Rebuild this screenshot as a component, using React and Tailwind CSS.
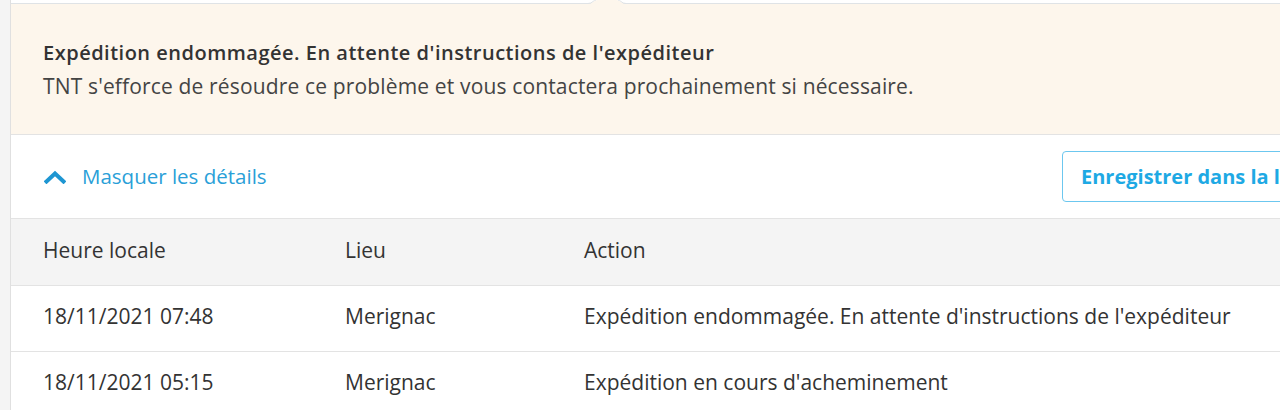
const rows = [
  { time: "18/11/2021 07:48", place: "Merignac", action: "Expédition endommagée. En attente d'instructions de l'expéditeur" },
  { time: "18/11/2021 05:15", place: "Merignac", action: "Expédition en cours d'acheminement" },
];

export default function App() {
  return (
    <div
      className="w-[1280px] h-[410px] overflow-hidden flex bg-[#f4f4f4] text-[#333]"
      style={{ fontFamily: "'Open Sans', sans-serif" }}
    >
      <div className="w-[10px] shrink-0" />
      <div className="w-[1340px] shrink-0 bg-white border-l border-[#e0e0e0] flex flex-col">
        {/* top strip with pointer */}
        <div className="relative h-[4px] shrink-0 border-b border-[#dfe3e6] bg-white">
          <svg className="absolute left-[574px] top-0" width="44" height="5" viewBox="0 0 44 5">
            <path d="M0 4 L3 4 Q6 4 8 2 Q10 0 13 0 L31 0 Q34 0 36 2 Q38 4 41 4 L44 4 L44 5 L0 5 Z" fill="#fdf6ec" />
            <path d="M0 3.5 L3 3.5 Q6 3.5 8 1.5 Q9.5 0 11 0" stroke="#dfe3e6" fill="none" />
            <path d="M33 0 Q34.5 0 36 1.5 Q38 3.5 41 3.5 L44 3.5" stroke="#dfe3e6" fill="none" />
          </svg>
        </div>
        <div className="h-[131px] shrink-0 bg-[#fdf6ec] px-[32px] pt-[33px] border-b border-[#e3e3e3]">
          <p className="text-[20px] font-semibold text-[#333] leading-[32px] tracking-[0.5px]">
            Expédition endommagée. En attente d'instructions de l'expéditeur
          </p>
          <p className="text-[21px] text-[#444] leading-[34px] tracking-[0.15px]">
            TNT s'efforce de résoudre ce problème et vous contactera prochainement si nécessaire.
          </p>
        </div>
        <div className="h-[84px] shrink-0 flex items-center justify-between pl-[33px] pr-[10px] border-b border-[#e3e3e3]">
          <button className="flex items-center gap-[16px] text-[#2a9fd8] text-[20.5px]">
            <svg width="22" height="14" viewBox="0 0 22 14" className="mt-[1px]">
              <polyline points="2.5,11.5 11,3.5 19.5,11.5" fill="none" stroke="#1e96d2" strokeWidth="4" strokeLinecap="square" />
            </svg>
            Masquer les détails
          </button>
          <button className="h-[51px] w-[278px] border border-[#6cc7ef] rounded-[4px] text-left pl-[18px] text-[20px] font-bold text-[#1ea9e4]">
            Enregistrer dans la liste
          </button>
        </div>
        <div className="grid grid-cols-[302px_239px_1fr] h-[67px] shrink-0 items-center bg-[#f4f4f4] pl-[32px] pb-[3px] border-b border-[#e3e3e3] text-[21px] text-[#333]">
          <span>Heure locale</span>
          <span>Lieu</span>
          <span>Action</span>
        </div>
        {rows.map((r) => (
          <div
            key={r.time}
            className="grid grid-cols-[302px_239px_1fr] h-[66px] shrink-0 items-center pl-[32px] pb-[3px] border-b border-[#e3e3e3] text-[21px] text-[#333]"
          >
            <span>{r.time}</span>
            <span>{r.place}</span>
            <span>{r.action}</span>
          </div>
        ))}
      </div>
    </div>
  );
}
